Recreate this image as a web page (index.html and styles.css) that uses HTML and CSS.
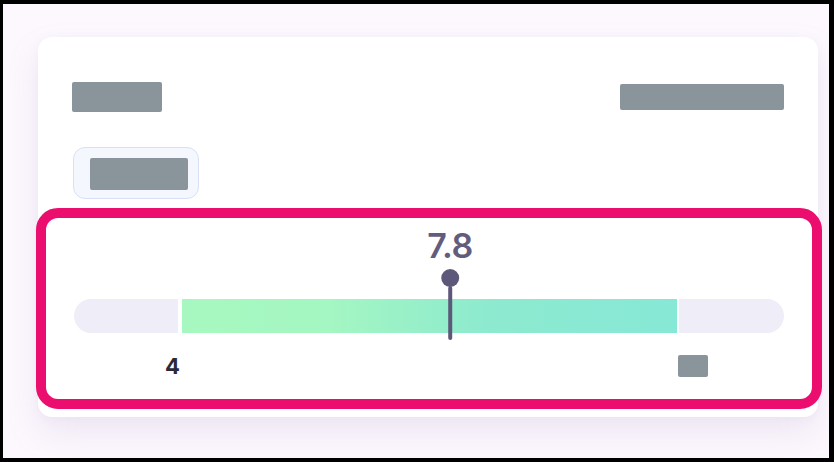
FILE: index.html
```html
<!DOCTYPE html>
<html lang="en">
<head>
<meta charset="utf-8">
<title>Range</title>
<link rel="stylesheet" href="styles.css">
</head>
<body>
<div class="screen">
  <div class="card">
    <div class="row">
      <span class="ph ph-title"></span>
      <span class="ph ph-meta"></span>
    </div>
    <div class="pill"><span class="ph ph-pill"></span></div>
    <div class="slider">
      <div class="pointer" style="left:376px">
        <span class="value">7.8</span>
        <span class="knob"></span>
        <span class="stem"></span>
      </div>
      <div class="track">
        <div class="fill" style="margin-left:104px;width:501px"></div>
      </div>
      <div class="labels">
        <span class="min">4</span>
        <span class="ph ph-max"></span>
      </div>
    </div>
    <div class="highlight"></div>
  </div>
</div>
</body>
</html>
```

FILE: styles.css
```css
html {
  background: #000;
}
body {
  margin: 0;
  font-family: Inter, "Noto Sans", sans-serif;
}
.screen {
  width: 826px;
  height: 454px;
  margin: 4px 5px 4px 3px;
  background: #fcf8fd;
  overflow: hidden;
  display: flow-root;
}
.card {
  position: relative;
  box-sizing: border-box;
  width: 780px;
  height: 380px;
  margin: 33px 0 0 35px;
  padding: 45px 34px 38px 34px;
  background: #fff;
  border-radius: 14px;
  box-shadow: 0 16px 32px rgba(176, 156, 206, 0.18), 0 2px 8px rgba(176, 156, 206, 0.08);
}
.row {
  display: flex;
  justify-content: space-between;
  align-items: center;
  height: 30px;
}
.ph {
  display: block;
  background: #8a949b;
  border-radius: 2px;
}
.ph-title {
  width: 90px;
  height: 30px;
}
.ph-meta {
  width: 164px;
  height: 26px;
}
.pill {
  display: inline-block;
  vertical-align: top;
  margin: 35px 0 0 1px;
  padding: 10px 10px 8px 16px;
  border: 1.5px solid #d6e1f7;
  border-radius: 12px;
  background: #f4f7fd;
}
.ph-pill {
  width: 98px;
  height: 32px;
}
.slider {
  position: relative;
  margin: 27px 0 0 2px;
  padding-top: 73px;
}
.pointer {
  position: absolute;
  top: 0;
  display: flex;
  flex-direction: column;
  align-items: center;
  transform: translateX(-50%);
  z-index: 2;
}
.value {
  font-size: 34px;
  line-height: 40px;
  font-weight: 600;
  color: #625c7d;
  letter-spacing: -0.5px;
}
.knob {
  width: 18px;
  height: 18px;
  margin-top: 3px;
  border-radius: 50%;
  background: #5d5879;
}
.stem {
  width: 4px;
  height: 54px;
  margin-top: -1px;
  border-radius: 2px;
  background: #5d5879;
}
.track {
  display: flex;
  height: 34px;
  border-radius: 17px;
  background: #efedf7;
  overflow: hidden;
}
.fill {
  box-sizing: border-box;
  height: 100%;
  border-left: 4px solid #fff;
  border-right: 2px solid #fff;
  background: linear-gradient(90deg, #a7f8c0 0%, #a4f6c2 30%, #8deacf 62%, #86e8d6 100%);
}
.labels {
  display: flex;
  justify-content: space-between;
  align-items: center;
  height: 24px;
  margin-top: 21px;
  padding: 0 76px 0 91px;
}
.min {
  font-size: 22px;
  line-height: 24px;
  font-weight: 700;
  color: #2c2939;
}
.ph-max {
  width: 30px;
  height: 22px;
}
.highlight {
  position: absolute;
  left: -2px;
  top: 171px;
  width: 786px;
  height: 201px;
  box-sizing: border-box;
  border: 10px solid #ec0e6e;
  border-radius: 22px;
  pointer-events: none;
}
```
